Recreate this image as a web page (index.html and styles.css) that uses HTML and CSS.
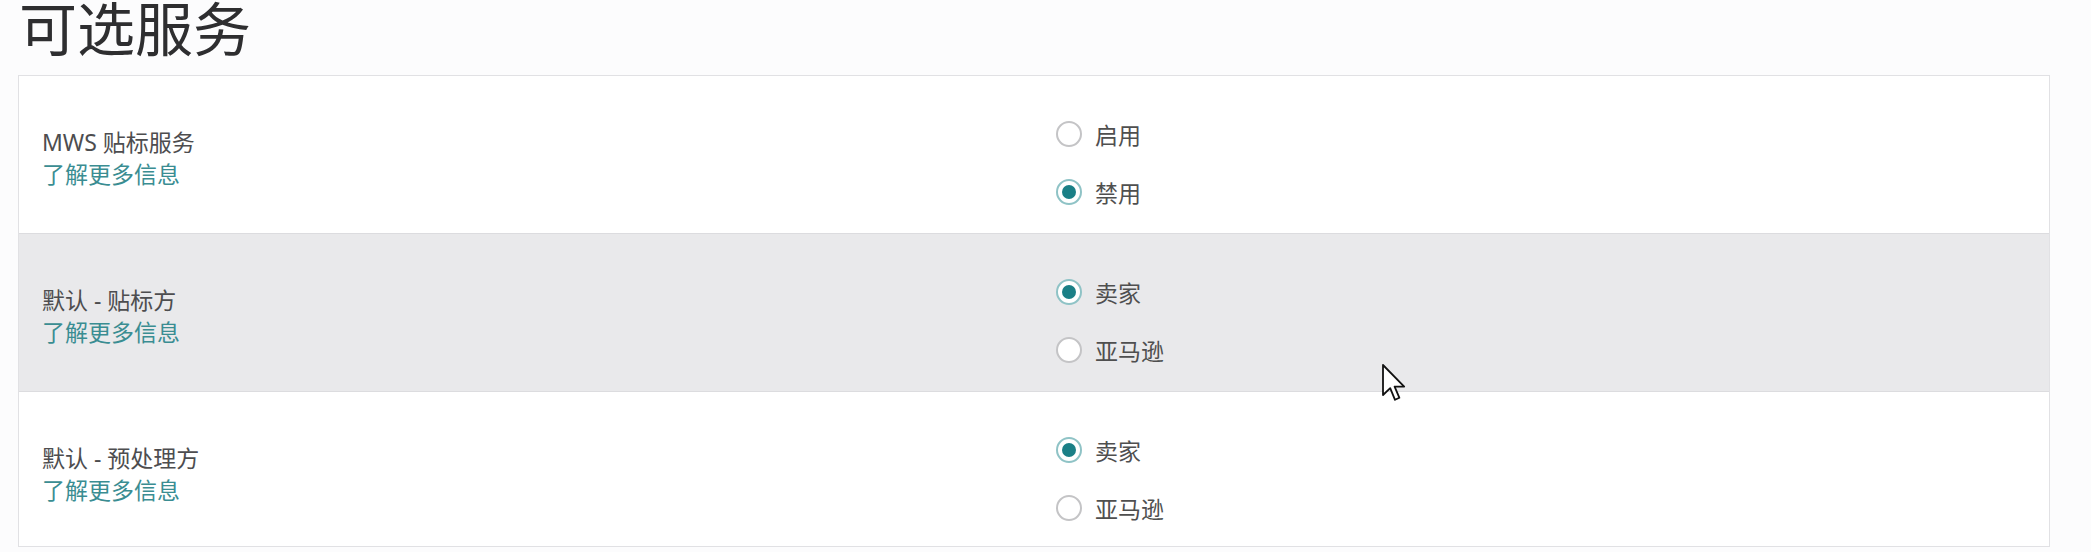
FILE: index.html
```html
<!DOCTYPE html>
<html lang="zh-CN">

<head>
    <meta charset="UTF-8">
    <meta name="viewport" content="width=device-width, initial-scale=1.0">
    <title>可选服务</title>
    <link rel="stylesheet" href="styles.css">
</head>

<body>
    <div class="page">
        <h1 class="title">可选服务</h1>
        <div class="card">
            <div class="row">
                <div class="label">
                    <div class="name">MWS 贴标服务</div>
                    <a class="more" href="#">了解更多信息</a>
                </div>
                <div class="options">
                    <label class="opt"><span class="radio"></span>启用</label>
                    <label class="opt"><span class="radio on"></span>禁用</label>
                </div>
            </div>
            <div class="row gray">
                <div class="label">
                    <div class="name">默认 - 贴标方</div>
                    <a class="more" href="#">了解更多信息</a>
                </div>
                <div class="options">
                    <label class="opt"><span class="radio on"></span>卖家</label>
                    <label class="opt"><span class="radio"></span>亚马逊</label>
                </div>
            </div>
            <div class="row">
                <div class="label">
                    <div class="name">默认 - 预处理方</div>
                    <a class="more" href="#">了解更多信息</a>
                </div>
                <div class="options">
                    <label class="opt"><span class="radio on"></span>卖家</label>
                    <label class="opt"><span class="radio"></span>亚马逊</label>
                </div>
            </div>
        </div>
    </div>
    <!-- mouse pointer -->
    <svg class="cursor" width="26" height="40" viewBox="0 0 13 20">
        <path d="M1 1 L1 16 L4.6 12.6 L7 18.4 L9.2 17.4 L6.8 11.8 L11.6 11.8 Z" fill="#fff" stroke="#111" stroke-width="0.9" stroke-linejoin="round"/>
    </svg>
</body>

</html>
```

FILE: styles.css
```css
* {
    margin: 0;
    padding: 0;
    box-sizing: border-box;
}
body {
    background: #fcfcfd;
    font-family: "Noto Sans", "Noto Sans CJK SC", sans-serif;
    color: #4f4f4f;
}
.page {
    padding-left: 18px;
    width: 2050px;
}
.title {
    font-family: "Noto Sans CJK SC", sans-serif;
    font-size: 58px;
    font-weight: 400;
    line-height: 53px;
    height: 53px;
    color: #2e2e30;
    padding-left: 1px;
    margin-bottom: 22px;
}
.card {
    border: 1px solid #e1e1e4;
    background: #fff;
}
.row {
    display: grid;
    grid-template-columns: 1fr 1fr;
    height: 157px;
}
.row + .row {
    border-top: 1px solid #dcdcdf;
    height: 158px;
}
.row:last-child {
    height: 155px;
}
.row.gray {
    background: #e9e9eb;
}
.label {
    padding: 50px 0 0 23px;
    font-size: 23px;
    line-height: 32px;
}
.name {
    color: #4d4d4f;
}
.more {
    color: #3a8d92;
    text-decoration: none;
}
.options {
    padding: 41px 0 0 22px;
    display: flex;
    flex-direction: column;
    gap: 24px;
}
.opt {
    display: flex;
    align-items: center;
    gap: 13px;
    height: 34px;
    font-size: 23px;
    color: #4f4f4f;
}
.radio {
    width: 26px;
    height: 26px;
    border-radius: 50%;
    border: 2px solid #c4c4c6;
    background: #fff;
    position: relative;
}
.radio.on {
    border-color: #8fc3c6;
}
.radio.on::after {
    content: "";
    position: absolute;
    left: 4px;
    top: 4px;
    width: 14px;
    height: 14px;
    border-radius: 50%;
    background: #1a7f86;
}
.cursor {
    position: absolute;
    left: 1381px;
    top: 363px;
}
```
